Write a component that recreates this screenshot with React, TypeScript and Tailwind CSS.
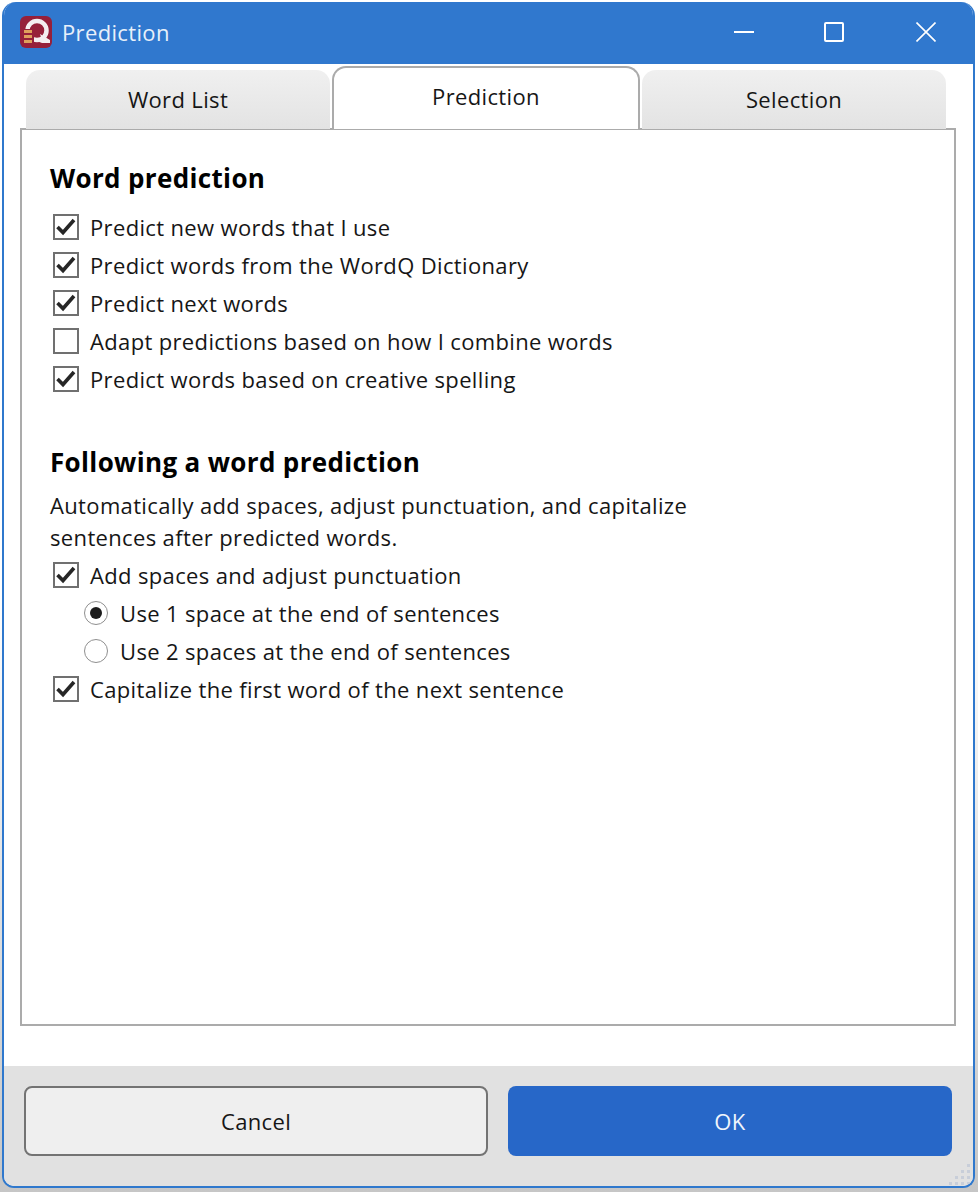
import React from 'react';

const Check = () => (
  <svg width="20" height="20" viewBox="0 0 20 20" fill="none">
    <path d="M1.5 10 L7 15.5 L18 3" stroke="#262626" strokeWidth="3.6" />
  </svg>
);

const CheckRow: React.FC<{ label: string; checked?: boolean }> = ({ label, checked = true }) => (
  <div className="flex h-[38px] items-center pl-[3px]">
    <div className="flex h-[26px] w-[26px] items-center justify-center border-2 border-[#707070] bg-white">
      {checked && <Check />}
    </div>
    <span className="ml-[11px]">{label}</span>
  </div>
);

const RadioRow: React.FC<{ label: string; checked?: boolean }> = ({ label, checked = false }) => (
  <div className="flex h-[38px] items-center pl-[34px]">
    <div className="flex h-[24px] w-[24px] items-center justify-center rounded-full border-[1.5px] border-[#8f8f8f] bg-white">
      {checked && <div className="h-[12px] w-[12px] rounded-full bg-[#1c1c1c]" />}
    </div>
    <span className="ml-[12px]">{label}</span>
  </div>
);

const Logo = () => (
  <svg width="32" height="32" viewBox="0 0 32 32">
    <rect width="32" height="32" rx="6" fill="#96203a" />
    <circle cx="17" cy="14.5" r="9.5" fill="none" stroke="#f4eef0" strokeWidth="4.5" />
    <path d="M14 24 H30 V27 H22 Z M20 18 L30 24 H22 Z" fill="#f4eef0" />
    <rect x="3" y="13" width="11" height="16" fill="#96203a" />
    <rect x="4" y="14" width="8" height="3" fill="#dfa05c" />
    <rect x="4" y="19" width="8" height="3" fill="#dfa05c" />
    <rect x="4" y="24" width="8" height="3" fill="#dfa05c" />
  </svg>
);

const Grip = () => (
  <svg width="24" height="24" viewBox="0 0 24 24" fill="#c8ced9">
    <rect x="20" y="2" width="3" height="3" />
    <rect x="14" y="8" width="3" height="3" />
    <rect x="20" y="8" width="3" height="3" />
    <rect x="8" y="14" width="3" height="3" />
    <rect x="14" y="14" width="3" height="3" />
    <rect x="20" y="14" width="3" height="3" />
    <rect x="2" y="20" width="3" height="3" />
    <rect x="8" y="20" width="3" height="3" />
    <rect x="14" y="20" width="3" height="3" />
    <rect x="20" y="20" width="3" height="3" />
  </svg>
);

export default function App() {
  return (
    <div className="h-[1192px] w-[978px] bg-gradient-to-b from-white via-white to-[#c6c6c6] pb-[4px] pl-[2px] pr-[3px] pt-[2px] font-['Open_Sans','Noto_Sans',sans-serif] text-[22px] tracking-[0.35px] text-[#161616]">
      <div className="flex h-full flex-col overflow-hidden rounded-b-[12px] rounded-t-[14px] border-x-2 border-b-2 border-[#2f78cd] bg-white">
        {/* title bar */}
        <div className="flex h-[62px] shrink-0 items-center bg-[#3078ce] pb-[2px] pl-[16px] text-white">
          <Logo />
          <span className="ml-[10px] text-[#e8f0fa]">Prediction</span>
          <div className="ml-auto flex items-center pr-[37px]">
            <div className="h-[2px] w-[20px] bg-white" />
            <div className="ml-[70px] h-[20px] w-[20px] rounded-[2px] border-2 border-white" />
            <svg className="ml-[72px]" width="20" height="20" viewBox="0 0 20 20">
              <path d="M0.5 0.5 L19.5 19.5 M19.5 0.5 L0.5 19.5" stroke="#fff" strokeWidth="1.6" />
            </svg>
          </div>
        </div>

        {/* tabs */}
        <div className="relative z-10 -mb-[1px] mt-[2px] flex items-end pl-[22px]">
          <div className="flex h-[59px] w-[304px] items-center justify-center rounded-t-[14px] bg-gradient-to-b from-[#f0f0f0] to-[#e3e3e3] pb-[1px]">
            Word List
          </div>
          <div className="ml-[2px] flex h-[63px] w-[308px] items-center justify-center rounded-t-[14px] border-x-2 border-t-2 border-[#ababab] bg-white pb-[4px]">
            Prediction
          </div>
          <div className="ml-[2px] flex h-[59px] w-[304px] items-center justify-center rounded-t-[14px] bg-gradient-to-b from-[#f0f0f0] to-[#e3e3e3] pb-[1px]">
            Selection
          </div>
        </div>

        {/* panel */}
        <div className="ml-[16px] mr-[17px] h-[898px] shrink-0 border-2 border-[#ababab] bg-white pl-[28px] pt-[28px]">
          <h2 className="flex h-[40px] items-center text-[26px] font-bold text-black">Word prediction</h2>
          <div className="mt-[10px]">
            <CheckRow label="Predict new words that I use" />
            <CheckRow label="Predict words from the WordQ Dictionary" />
            <CheckRow label="Predict next words" />
            <CheckRow label="Adapt predictions based on how I combine words" checked={false} />
            <CheckRow label="Predict words based on creative spelling" />
          </div>
          <h2 className="mt-[44px] flex h-[40px] items-center text-[26px] font-bold text-black">Following a word prediction</h2>
          <p className="mt-[7px] leading-[32px]">
            Automatically add spaces, adjust punctuation, and capitalize
            <br />
            sentences after predicted words.
          </p>
          <div className="mt-[3px]">
            <CheckRow label="Add spaces and adjust punctuation" />
            <RadioRow label="Use 1 space at the end of sentences" checked />
            <RadioRow label="Use 2 spaces at the end of sentences" />
            <CheckRow label="Capitalize the first word of the next sentence" />
          </div>
        </div>

        {/* footer */}
        <div className="relative mt-[40px] flex flex-1 gap-[20px] bg-[#e1e1e1] pl-[20px] pt-[20px]">
          <button className="flex h-[70px] w-[464px] items-center justify-center rounded-[8px] border-2 border-[#737373] bg-[#efefef]">
            Cancel
          </button>
          <button className="flex h-[70px] w-[444px] items-center justify-center rounded-[8px] bg-[#2767c8] text-[#f0f5fc]">
            OK
          </button>
          <div className="absolute bottom-0 right-[2px]">
            <Grip />
          </div>
        </div>
      </div>
    </div>
  );
}
